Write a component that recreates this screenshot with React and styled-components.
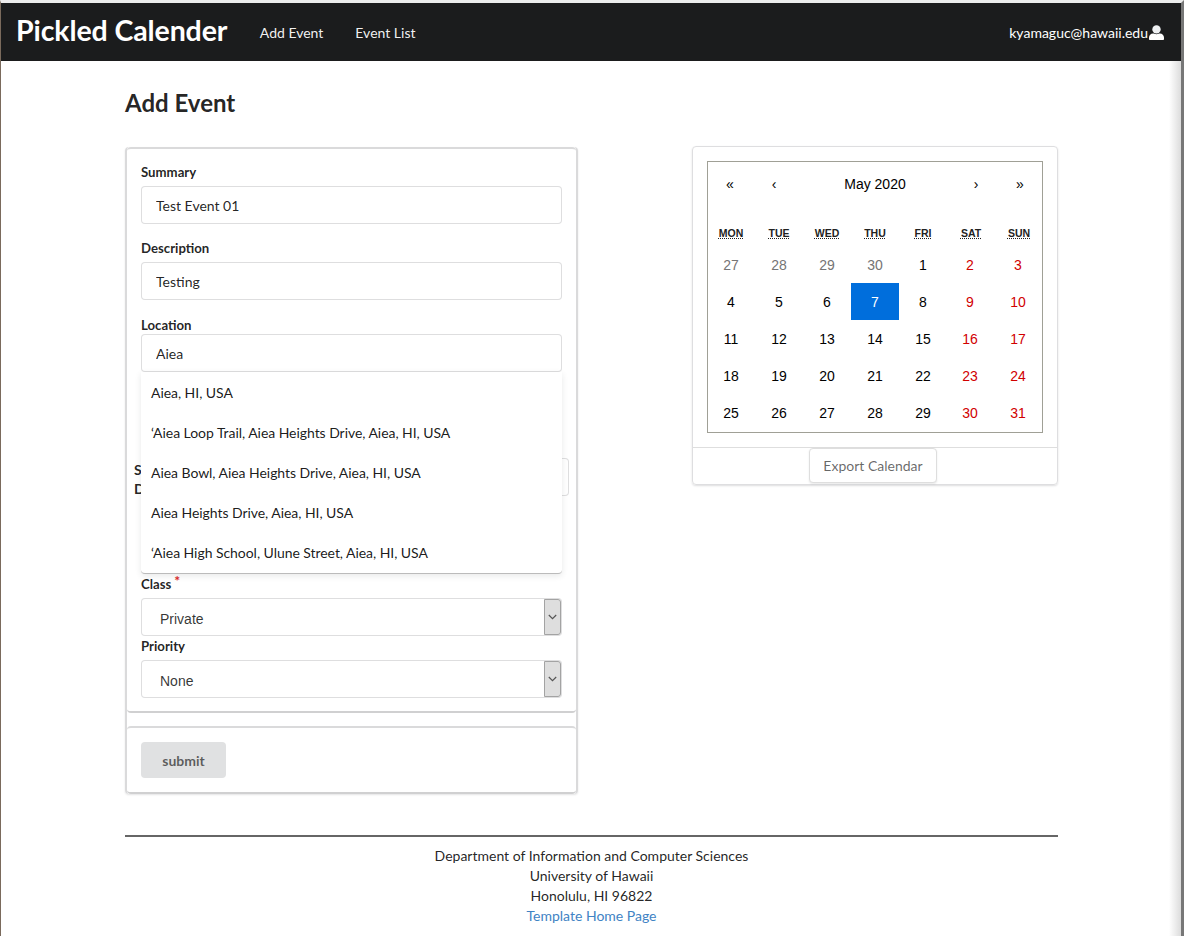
import React from 'react';
import styled, { createGlobalStyle } from 'styled-components';

const Global = createGlobalStyle`
  html, body { margin: 0; padding: 0; background: #fff; }
  body { font-family: Lato, "Helvetica Neue", Arial, sans-serif; font-size: 14px; line-height: 20px; color: rgba(0,0,0,.87); }
  * { box-sizing: border-box; }
`;

const Frame = styled.div`
  height: 936px; overflow: hidden;
  border-top: 3px solid #ececec;
  border-left: 1px solid #7a6a5c;
  border-right: 3px solid #777;
  display: flex; flex-direction: column;
`;
const NavBar = styled.nav`
  height: 58px; flex: none; background: #1b1c1d; color: #fff;
  display: flex; align-items: center; padding: 0 17px 0 15px;
`;
const Brand = styled.div`font-size: 28.5px; font-weight: 700; line-height: 34px; margin-right: 32.5px; padding-bottom: 4px; letter-spacing: -0.1px;`;
const NavLink = styled.a`font-size: 14px; margin-right: 32px; color: rgba(255,255,255,.95); padding-top: 1px;`;
const NavUser = styled.div`
  margin-left: auto; display: flex; align-items: center; gap: 1px; font-size: 14px; padding-top: 1px;
`;
const Body = styled.main`
  flex: 1; padding: 0 0 0 124px;
  background: linear-gradient(to right, #fff calc(100% - 12px), #dcdcdc 100%);
`;
const Container = styled.div`width: 933px;`;
const Title = styled.h1`font-size: 24px; font-weight: 700; line-height: 30px; margin: 27px 0 28px;`;
const Columns = styled.div`display: flex; justify-content: space-between; align-items: flex-start;`;
const FormGroup = styled.form`
  width: 453px; margin-top: 1px; border: 2px solid #dadadb; border-top: none; border-bottom: none; border-radius: 4px;
  display: flex; flex-direction: column; gap: 13px; box-shadow: 0 1px 2px rgba(34,36,38,.12);
`;
const FormSegment = styled.div`
  border-top: 2px solid #dadadb; border-bottom: 2px solid #d0d0d1; border-radius: 4px;
  padding: ${p => p.$top ?? 13}px 14px ${p => p.$bottom ?? 13}px;
`;
const FieldLabel = styled.label`display: block; font-size: 13.2px; font-weight: 700; line-height: 17px; margin-bottom: ${p => p.$gap ?? 5}px;`;
const Field = styled.div`margin-bottom: ${p => p.$gap ?? 16}px; position: relative;`;
const TextInput = styled.input`
  display: block; width: 100%; height: 38px; padding: 0 14px; font: 14px Lato, sans-serif;
  color: rgba(0,0,0,.87); background: #fff; border: 1px solid rgba(34,36,38,.15); border-radius: 4px; outline: none;
`;
const Suggestions = styled.ul`
  position: absolute; z-index: 5; left: 0; right: 0; top: 100%; margin: 0; padding: 1px 0 0; list-style: none;
  background: #fff; border-bottom: 1px solid #bbb; border-radius: 0 0 4px 4px; box-shadow: 0 2px 6px rgba(34,36,38,.1);
`;
const Suggestion = styled.li`height: 40px; padding: 0 10px; display: flex; align-items: center; font-size: 14px; letter-spacing: -0.05px; color: rgba(0,0,0,.9);`;
const DateRow = styled.div`display: flex; margin: 83px -7px 37px; gap: 6px; align-items: center;`;
const DateLabel = styled.label`width: 36px; font-size: 14px; font-weight: 700; line-height: 19px; flex: none; padding-top: 5px;`;
const SelectBox = styled.div`
  display: flex; height: 38px; align-items: stretch; border: 1px solid rgba(34,36,38,.15); border-radius: 4px;
  font-family: "Liberation Sans", Arial, sans-serif; font-size: 14px; margin-bottom: ${p => p.$gap ?? 0}px; background: #fff;
`;
const SelectValue = styled.span`flex: 1; padding: 3px 0 0 18px; display: flex; align-items: center; color: rgba(0,0,0,.8);`;
const SelectArrow = styled.span`
  width: 17px; background: #dedede; border: 1px solid #a3a3a3; border-radius: 0 3px 3px 0; display: flex; align-items: center; justify-content: center; color: #555;
`;
const Required = styled.span`color: #db2828; margin-left: 3px; font-size: 14px; vertical-align: 3px; line-height: 0;`;
const SubmitButton = styled.button`
  display: block; width: 85px; height: 36px; border: none; border-radius: 4px; background: #e0e1e2; color: rgba(0,0,0,.6);
  font: 700 14px Lato, sans-serif; padding: 0;
`;
const CalCard = styled.section`
  width: 366px; height: 339px; border: 1px solid #dedee0; border-radius: 4px; box-shadow: 0 1px 2px rgba(34,36,38,.15);
  display: flex; flex-direction: column;
`;
const CalBody = styled.div`padding: 14px 14px 14px; border-bottom: 1px solid #dedede;`;
const Calendar = styled.div`
  width: 336px; height: 272px; border: 1px solid #a0a096; background: #fff; font-family: "Liberation Sans", Arial, sans-serif; color: #000;
`;
const CalNav = styled.div`display: flex; height: 44px; margin-bottom: 16px; font-size: 14px; align-items: center;`;
const CalNavBtn = styled.span`width: 44px; text-align: center; flex: none;`;
const CalNavLabel = styled.span`flex: 1; text-align: center;`;
const Grid = styled.div`display: grid; grid-template-columns: repeat(7, 48px); margin: 0 -1px; width: 336px;`;
const Weekday = styled.abbr`
  height: 24px; padding-bottom: 2px; display: flex; align-items: center; justify-content: center; font-size: 10.5px; font-weight: 700;
  text-decoration: underline dotted; color: #222; text-transform: uppercase;
`;
const colors = { muted: '#757575', weekend: '#d10000', normal: '#000' };
const Day = styled.div`
  height: 37px; display: flex; align-items: center; justify-content: center; font-size: 14px;
  padding-right: ${p => p.$kind === 'weekend' ? 2 : 0}px;
  color: ${p => p.$active ? '#fff' : colors[p.$kind]}; background: ${p => p.$active ? '#006edc' : 'transparent'};
`;
const CalFooter = styled.div`display: flex; justify-content: center; padding: 0 4px 0 0;`;
const ExportBtn = styled.button`
  width: 128px; height: 35px; background: #fff; border: 1px solid #dedede; border-radius: 4px; color: rgba(0,0,0,.6);
  font: 14px Lato, sans-serif; padding: 0; box-shadow: 0 1px 2px rgba(34,36,38,.1);
`;
const Footer = styled.footer`margin-top: 41px; border-top: 2px solid #666; padding-top: 9px; text-align: center; font-size: 14px; line-height: 20px;`;
const FooterLink = styled.a`color: #4183c4;`;

const suggestions = ['Aiea, HI, USA', '‘Aiea Loop Trail, Aiea Heights Drive, Aiea, HI, USA', 'Aiea Bowl, Aiea Heights Drive, Aiea, HI, USA', 'Aiea Heights Drive, Aiea, HI, USA', '‘Aiea High School, Ulune Street, Aiea, HI, USA'];
const weekdays = ['Mon', 'Tue', 'Wed', 'Thu', 'Fri', 'Sat', 'Sun'];
const days = [27, 28, 29, 30, ...Array.from({ length: 31 }, (_, i) => i + 1)];

const Chevron = () => (
  <svg width="9" height="6" viewBox="0 0 9 6" fill="none" stroke="currentColor" strokeWidth="1.2"><path d="M0.8 1l3.7 3.6L8.2 1" /></svg>
);

const UserIcon = () => (
  <svg width="15" height="15" viewBox="0 0 15 15" fill="#eef0f2" aria-hidden="true">
    <circle cx="7.5" cy="4.4" r="4.2" />
    <path d="M0 14v-1.3C0 10.4 1.8 8.6 4 8.6c.9 0 1.8.6 3.5.6s2.6-.6 3.5-.6c2.2 0 4 1.8 4 4.1V14c0 .6-.5 1-1 1H1c-.5 0-1-.4-1-1z" fill="#fff" />
  </svg>
);

const Select = ({ value, gap }) => (
  <SelectBox $gap={gap}><SelectValue>{value}</SelectValue><SelectArrow><Chevron /></SelectArrow></SelectBox>
);

export default function App() {
  return (
    <>
      <Global />
      <Frame>
        <NavBar>
          <Brand>Pickled Calender</Brand>
          <NavLink>Add Event</NavLink>
          <NavLink>Event List</NavLink>
          <NavUser>kyamaguc@hawaii.edu<UserIcon /></NavUser>
        </NavBar>
        <Body>
          <Container>
            <Title>Add Event</Title>
            <Columns>
              <FormGroup>
                <FormSegment $top={15}>
                  <Field><FieldLabel>Summary</FieldLabel><TextInput readOnly value="Test Event 01" /></Field>
                  <Field $gap={17}><FieldLabel>Description</FieldLabel><TextInput readOnly value="Testing" /></Field>
                  <Field $gap={0}>
                    <FieldLabel $gap={0}>Location</FieldLabel>
                    <TextInput readOnly value="Aiea" />
                    <Suggestions>{suggestions.map(s => <Suggestion key={s}>{s}</Suggestion>)}</Suggestions>
                  </Field>
                  <DateRow><DateLabel>Start Date</DateLabel><TextInput readOnly /></DateRow>
                  <Select value="" gap={3} />
                  <FieldLabel>Class<Required>*</Required></FieldLabel>
                  <Select value="Private" gap={2} />
                  <FieldLabel>Priority</FieldLabel>
                  <Select value="None" />
                </FormSegment>
                <FormSegment $top={14} $bottom={14}><SubmitButton type="button">submit</SubmitButton></FormSegment>
              </FormGroup>
              <CalCard>
                <CalBody>
                  <Calendar>
                    <CalNav>
                      <CalNavBtn>«</CalNavBtn><CalNavBtn>‹</CalNavBtn>
                      <CalNavLabel>May 2020</CalNavLabel>
                      <CalNavBtn>›</CalNavBtn><CalNavBtn>»</CalNavBtn>
                    </CalNav>
                    <Grid>
                      {weekdays.map(w => <Weekday key={w}>{w}</Weekday>)}
                      {days.map((d, i) => (
                        <Day key={i} $active={i === 10} $kind={i < 4 ? 'muted' : i % 7 >= 5 ? 'weekend' : 'normal'}>{d}</Day>
                      ))}
                    </Grid>
                  </Calendar>
                </CalBody>
                <CalFooter><ExportBtn type="button">Export Calendar</ExportBtn></CalFooter>
              </CalCard>
            </Columns>
            <Footer>
              <div>Department of Information and Computer Sciences</div>
              <div>University of Hawaii</div>
              <div>Honolulu, HI 96822</div>
              <FooterLink>Template Home Page</FooterLink>
            </Footer>
          </Container>
        </Body>
      </Frame>
    </>
  );
}
